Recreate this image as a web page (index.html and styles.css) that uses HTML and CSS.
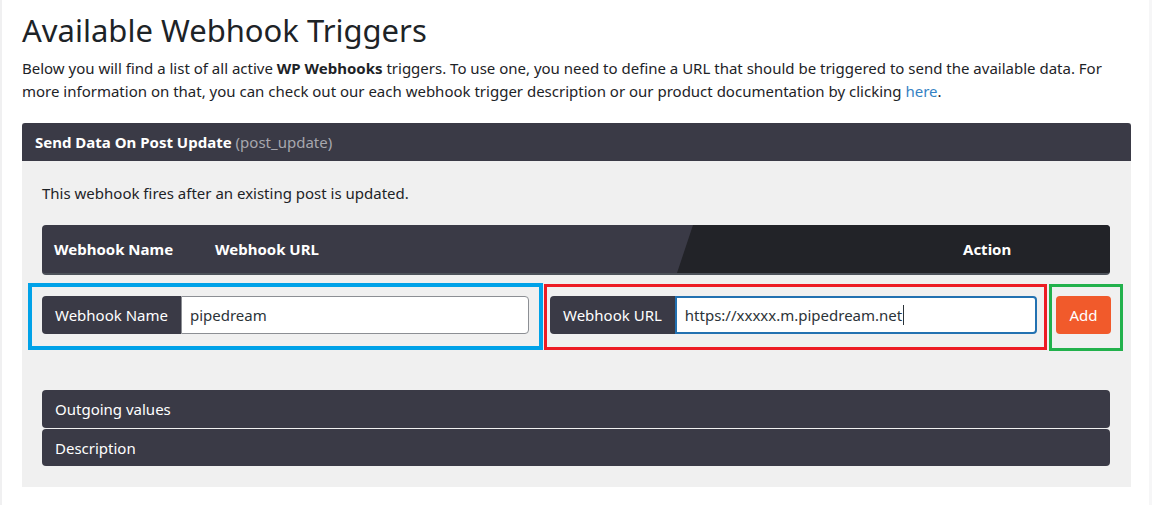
FILE: index.html
```html
<!DOCTYPE html>
<html lang="en">
<head>
<meta charset="utf-8">
<title>Available Webhook Triggers</title>
<link rel="stylesheet" href="styles.css">
</head>
<body>
<div class="page">
  <h1 class="title">Available Webhook Triggers</h1>
  <p class="intro">Below you will find a list of all active <strong>WP Webhooks</strong> triggers. To use one, you need to define a URL that should be triggered to send the available data. For more information on that, you can check out our each webhook trigger description or our product documentation by clicking <a href="#" class="link">here</a>.</p>

  <section class="card">
    <header class="card-head"><strong>Send Data On Post Update</strong> <span class="slug">(post_update)</span></header>
    <div class="card-body">
      <p class="desc">This webhook fires after an existing post is updated.</p>

      <div class="table-head">
        <div class="th th-name">Webhook Name</div>
        <div class="th th-url">Webhook URL</div>
        <div class="th th-action">Action</div>
      </div>

      <div class="add-row">
        <div class="mark mark-blue">
          <div class="group">
            <span class="group-label">Webhook Name</span>
            <input class="group-input" type="text" value="pipedream">
          </div>
        </div>
        <div class="mark mark-red">
          <div class="group">
            <span class="group-label">Webhook URL</span>
            <div class="group-input focused">https://xxxxx.m.pipedream.net<span class="caret"></span></div>
          </div>
        </div>
        <div class="mark mark-green">
          <button class="btn-add" type="button">Add</button>
        </div>
      </div>

      <div class="bars">
        <div class="bar">Outgoing values</div>
        <div class="bar">Description</div>
      </div>
    </div>
  </section>
</div>
</body>
</html>
```

FILE: styles.css
```css
* { box-sizing: border-box; }

html, body {
  margin: 0;
  padding: 0;
  background: #ffffff;
}

body {
  font-family: "Noto Sans", "Open Sans", sans-serif;
  color: #1d2327;
  border-left: 2px solid #f0f0f1;
  border-right: 3px solid #f6f6f7;
  min-height: 505px;
}

.page {
  padding: 0 18px 0 20px;
}

.title {
  margin: 0;
  padding-top: 10px;
  font-size: 31px;
  line-height: 40px;
  font-weight: 400;
  color: #1d2327;
}

.intro {
  margin: 7px 0 20px;
  font-size: 15px;
  line-height: 23px;
  color: #1d2327;
}

.intro strong { font-weight: 700; }

.link { color: #3582c4; text-decoration: none; }

.card {
  background: #f0f0f0;
}

.card-head {
  background: #3a3a46;
  color: #ffffff;
  height: 38px;
  display: flex;
  align-items: center;
  gap: 4px;
  padding: 0 13px;
  font-size: 15px;
  border-radius: 3px 3px 0 0;
}

.card-head strong { font-weight: 700; }

.slug { color: #a7a7ae; }

.card-body {
  padding: 20px 21px 21px 20px;
}

.desc {
  margin: 0 0 20px;
  font-size: 15px;
  line-height: 24px;
  color: #1d2327;
}

.table-head {
  display: flex;
  height: 50px;
  background: #3a3a46;
  border-bottom: 2px solid #4d525a;
  border-radius: 4px;
  overflow: hidden;
  color: #ffffff;
  font-weight: 700;
  font-size: 15px;
}

.th {
  display: flex;
  align-items: center;
  padding: 0 12px;
}

.th-name { width: 161px; }
.th-url { width: 474px; }

.th-action {
  flex: 1;
  background: #222328;
  clip-path: polygon(16px 0, 100% 0, 100% 100%, 0 100%);
  padding-left: 286px;
}

.add-row {
  display: flex;
  align-items: flex-start;
  margin: 8px -13px 0 -14px;
}

.mark { flex: 0 0 auto; }

.mark-blue {
  width: 515px;
  height: 67px;
  border: 4px solid #00a2e8;
  padding: 9px 10px 0 10px;
}

.mark-red {
  width: 503px;
  height: 66px;
  margin-top: 1px;
  margin-left: 1px;
  border: 3px solid #ed1c24;
  padding: 9px 7px 0 3px;
}

.mark-green {
  width: 74px;
  height: 67px;
  margin-top: 1px;
  margin-left: 2px;
  border: 3px solid #22b14c;
  padding: 9px 0 0 4px;
}

.group {
  display: flex;
  height: 38px;
}

.group-label {
  display: flex;
  align-items: center;
  background: #3a3a46;
  color: #ffffff;
  font-size: 15px;
  padding: 0 13px;
  border-radius: 4px 0 0 4px;
  white-space: nowrap;
}

.group-input {
  flex: 1;
  min-width: 0;
  height: 38px;
  margin: 0;
  background: #ffffff;
  border: 1px solid #8c8f94;
  border-radius: 0 4px 4px 0;
  padding: 0 8px;
  font-family: inherit;
  font-size: 15px;
  color: #2c3338;
  outline: none;
}

.group-input.focused {
  display: flex;
  align-items: center;
  border: 2px solid #2271b1;
  padding: 0 8px;
}

.caret {
  display: inline-block;
  width: 1px;
  height: 20px;
  background: #2c3338;
  margin-left: 1px;
}

.btn-add {
  width: 55px;
  height: 38px;
  border: 0;
  border-radius: 4px;
  background: #f15a2b;
  color: #ffffff;
  font-family: inherit;
  font-size: 15px;
  padding: 0;
  cursor: pointer;
}

.bars {
  margin-top: 39px;
  display: flex;
  flex-direction: column;
}

.bar {
  background: #3a3a46;
  color: #ffffff;
  font-size: 15px;
  height: 38px;
  display: flex;
  align-items: center;
  padding: 0 13px;
  border-radius: 4px;
}

.bar + .bar {
  margin-top: 1px;
  height: 37px;
}
```
